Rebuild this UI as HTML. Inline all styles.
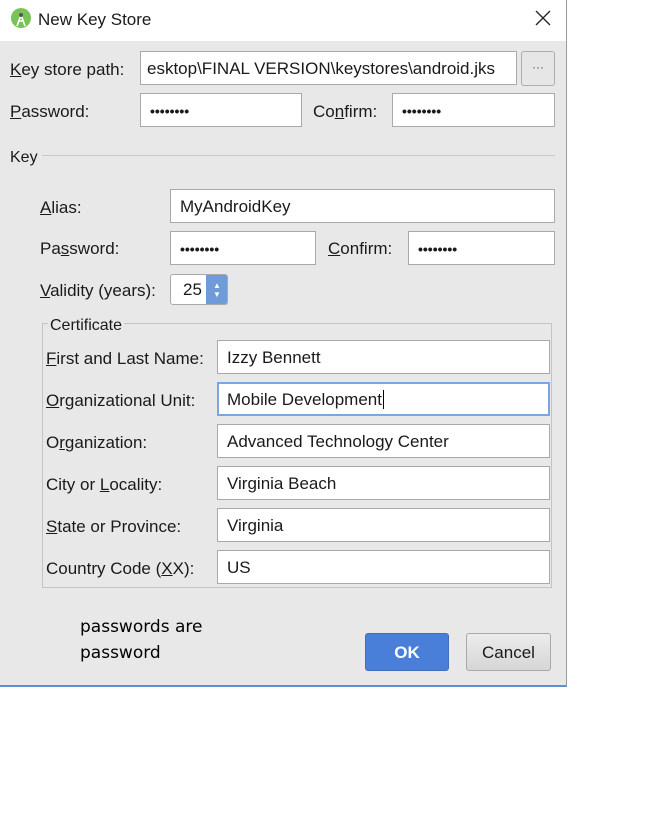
<!DOCTYPE html>
<html><head><meta charset="utf-8"><style>
*{margin:0;padding:0;box-sizing:border-box}
body{width:648px;height:816px;background:#fff;position:relative;overflow:hidden;font-family:"Liberation Sans",sans-serif;font-size:17px;color:#1a1a1a}
.a{position:absolute}
.dlg{left:0;top:0;width:567px;height:687px;border-right:1px solid #9a9a9a;border-bottom:2px solid #5b8fd6;background:#e8e8e8}
.tb{left:0;top:0;width:566px;height:41px;background:#fff}
.in{position:absolute;background:#fff;border:1px solid #a9a9a9;height:34px;line-height:34px;padding-left:9px;white-space:nowrap;overflow:hidden;font-size:17px}
.l{position:absolute;line-height:22px;white-space:nowrap}
.dots{font-size:14px;font-weight:bold}
u{text-decoration:underline}
</style></head><body>
<div class="a dlg"></div>
<div class="a tb"></div>
<svg class="a" style="left:10px;top:7px" width="22" height="22" viewBox="0 0 22 22"><circle cx="11" cy="11" r="10" fill="#78c257"/><path d="M7 19 L11 8 L15 19 M8.5 14 H13.5" stroke="#fff" stroke-width="1.6" fill="none"/><circle cx="11" cy="8" r="2" fill="#555"/></svg>
<div class="l" style="left:38px;top:9px;font-size:17px">New Key Store</div>
<svg class="a" style="left:535px;top:10px" width="16" height="16"><path d="M1 1L15 15M15 1L1 15" stroke="#222" stroke-width="1.3"/></svg>

<div class="l" style="left:10px;top:59px"><u>K</u>ey store path:</div>
<div class="in" style="left:140px;top:51px;width:377px;padding-left:6px">esktop\FINAL VERSION\keystores\android.jks</div>
<div class="a" style="left:521px;top:51px;width:34px;height:35px;border:1px solid #adadad;border-radius:3px;background:#e6e6e6;text-align:center;line-height:30px;font-size:12px;color:#555">···</div>
<div class="l" style="left:10px;top:101px"><u>P</u>assword:</div>
<div class="in dots" style="left:140px;top:93px;width:162px">••••••••</div>
<div class="l" style="left:313px;top:101px">Co<u>n</u>firm:</div>
<div class="in dots" style="left:392px;top:93px;width:163px">••••••••</div>

<div class="l" style="left:10px;top:147px;font-size:16px">Key</div>
<div class="a" style="left:42px;top:155px;width:513px;height:1px;background:#c8c8c8"></div>

<div class="l" style="left:40px;top:197px"><u>A</u>lias:</div>
<div class="in" style="left:170px;top:189px;width:385px">MyAndroidKey</div>
<div class="l" style="left:40px;top:238px">Pa<u>s</u>sword:</div>
<div class="in dots" style="left:170px;top:231px;width:146px">••••••••</div>
<div class="l" style="left:328px;top:238px"><u>C</u>onfirm:</div>
<div class="in dots" style="left:408px;top:231px;width:147px">••••••••</div>
<div class="l" style="left:40px;top:280px"><u>V</u>alidity (years):</div>
<div class="a" style="left:170px;top:274px;width:58px;height:31px;border:1px solid #a9a9a9;border-radius:3px;background:#fff;overflow:hidden"><span style="position:absolute;left:12px;top:5px">25</span><div style="position:absolute;left:35px;top:0;width:22px;height:31px;background:#6f9bd8;color:#fff;font-size:8px;text-align:center;line-height:9px;padding-top:6px">▲<br>▼</div></div>

<div class="a" style="left:42px;top:323px;width:510px;height:265px;border:1px solid #c4c4c4"></div>
<div class="l" style="left:48px;top:315px;background:#e8e8e8;padding:0 2px;font-size:16px">Certificate</div>

<div class="l" style="left:46px;top:348px"><u>F</u>irst and Last Name:</div>
<div class="in" style="left:217px;top:340px;width:333px">Izzy Bennett</div>
<div class="l" style="left:46px;top:390px"><u>O</u>rganizational Unit:</div>
<div class="in" style="left:217px;top:382px;width:333px;border:2px solid #7ba6e0;line-height:32px;padding-left:8px">Mobile Development<span style="border-left:1px solid #000;margin-left:1px"></span></div>
<div class="l" style="left:46px;top:432px">O<u>r</u>ganization:</div>
<div class="in" style="left:217px;top:424px;width:333px">Advanced Technology Center</div>
<div class="l" style="left:46px;top:474px">City or <u>L</u>ocality:</div>
<div class="in" style="left:217px;top:466px;width:333px">Virginia Beach</div>
<div class="l" style="left:46px;top:516px"><u>S</u>tate or Province:</div>
<div class="in" style="left:217px;top:508px;width:333px">Virginia</div>
<div class="l" style="left:46px;top:558px">Country Code (<u>X</u>X):</div>
<div class="in" style="left:217px;top:550px;width:333px">US</div>

<div class="l" style="left:80px;top:616px;color:#000;font-family:'DejaVu Sans',sans-serif;font-size:17px">passwords are</div>
<div class="l" style="left:80px;top:642px;font-size:17px;color:#000;font-family:'DejaVu Sans',sans-serif">password</div>

<div class="a" style="left:365px;top:633px;width:84px;height:38px;background:#4a7fd9;border:1px solid #3f6fbf;border-radius:3px;color:#fff;font-weight:bold;text-align:center;line-height:38px;font-size:17px">OK</div>
<div class="a" style="left:466px;top:633px;width:85px;height:38px;background:linear-gradient(#ececec,#d6d6d6);border:1px solid #a9a9a9;border-radius:3px;text-align:center;line-height:38px;font-size:17px">Cancel</div>
</body></html>
